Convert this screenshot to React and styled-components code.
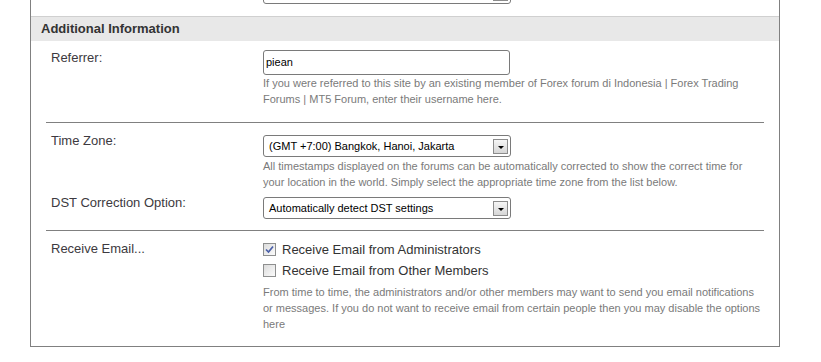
import React from "react";
import styled, { createGlobalStyle } from "styled-components";

const GlobalStyle = createGlobalStyle`
  body {
    margin: 0;
    background: #ffffff;
    font-family: Tahoma, "Liberation Sans", Arial, sans-serif;
  }
`;

const Page = styled.div`
  width: 821px;
  height: 362px;
  overflow: hidden;
  padding-left: 30px;
  box-sizing: border-box;
`;

const Panel = styled.div`
  width: 750px;
  margin-top: -19px;
  box-sizing: border-box;
  border: 1px solid #808080;
  border-top: none;
  background: #fff;
`;

const PrevRow = styled.div`
  padding: 1px 15px 12px 232px;
`;

const Header = styled.div`
  border-top: 1px solid #d0d0d0;
  background: #e8e8e8;
  height: 24px;
  line-height: 24px;
  padding-left: 10px;
  font-size: 13px;
  font-weight: bold;
  color: #333;
`;

const Body = styled.div`
  margin: 0 15px;
`;

const Row = styled.div`
  display: grid;
  grid-template-columns: 217px 500px;
  padding-top: ${(p) => p.pt}px;
  padding-bottom: ${(p) => p.pb}px;
  border-top: ${(p) => (p.divider ? "1px solid #808080" : "none")};
`;

const Labels = styled.div`
  display: flex;
  flex-direction: column;
  padding-left: 5px;
`;

const Label = styled.div`
  font-size: 13px;
  line-height: 16px;
  color: #3d3a40;
  margin-top: ${(p) => p.mt || 0}px;
`;

const Values = styled.div`
  display: flex;
  flex-direction: column;
  align-items: flex-start;
`;

const TextInput = styled.div`
  width: 247px;
  height: 25px;
  box-sizing: border-box;
  border: 1px solid #7a7a7a;
  border-radius: 3px;
  padding-left: 2px;
  font-size: 11px;
  line-height: 23px;
  color: #000;
`;

const SelectBox = styled.div`
  width: 248px;
  height: 22px;
  box-sizing: border-box;
  border: 1px solid #7a7a7a;
  border-radius: 3px;
  display: flex;
  align-items: center;
  justify-content: space-between;
  padding: 0 2px 0 5px;
  font-size: 11px;
  color: #000;
  margin-top: ${(p) => p.mt || 0}px;
`;

const DropButton = styled.div`
  width: 15px;
  height: 15px;
  box-sizing: border-box;
  border: 1px solid #8c8c8c;
  background: linear-gradient(#f6f6f6, #d6d6d6);
  display: flex;
  align-items: flex-end;
  justify-content: center;
  padding-bottom: 4px;
  &::after {
    content: "";
    border-left: 3px solid transparent;
    border-right: 3px solid transparent;
    border-top: 3px solid #000;
  }
`;

const Desc = styled.div`
  font-size: 11px;
  line-height: 16px;
  color: #7a7a7a;
  width: 500px;
  margin-top: ${(p) => p.mt || 0}px;
`;

const CheckRow = styled.label`
  display: flex;
  align-items: center;
  gap: 6px;
  height: 16px;
  font-size: 13px;
  color: #333;
  margin-top: ${(p) => p.mt || 0}px;
`;

const Box = styled.span`
  width: 13px;
  height: 13px;
  box-sizing: border-box;
  border: 1px solid #8e8f8f;
  background: linear-gradient(135deg, #dcdcdc, #fbfbfb);
  display: flex;
  align-items: center;
  justify-content: center;
`;

function Select({ children, mt }) {
  return (
    <SelectBox mt={mt}>
      <span>{children}</span>
      <DropButton />
    </SelectBox>
  );
}

function Checkbox({ checked, children, mt }) {
  return (
    <CheckRow mt={mt}>
      <Box>
        {checked && (
          <svg width="9" height="9" viewBox="0 0 9 9">
            <path d="M1 4.5 L3.5 7 L8 1.5" fill="none" stroke="#4a5fa8" strokeWidth="1.7" />
          </svg>
        )}
      </Box>
      {children}
    </CheckRow>
  );
}

export default function App() {
  return (
    <>
      <GlobalStyle />
      <Page>
        <Panel>
          <PrevRow>
            <Select>&nbsp;</Select>
          </PrevRow>
          <Header>Additional Information</Header>
          <Body>
            <Row pt={9} pb={15}>
              <Labels>
                <Label>Referrer:</Label>
              </Labels>
              <Values>
                <TextInput>piean</TextInput>
                <Desc>
                  If you were referred to this site by an existing member of Forex forum di Indonesia | Forex Trading
                  Forums | MT5 Forum, enter their username here.
                </Desc>
              </Values>
            </Row>
            <Row divider pt={10} pb={11}>
              <Labels>
                <Label>Time Zone:</Label>
                <Label mt={46}>DST Correction Option:</Label>
              </Labels>
              <Values>
                <Select mt={2}>(GMT +7:00) Bangkok, Hanoi, Jakarta</Select>
                <Desc mt={1}>
                  All timestamps displayed on the forums can be automatically corrected to show the correct time for
                  your location in the world. Simply select the appropriate time zone from the list below.
                </Desc>
                <Select mt={7}>Automatically detect DST settings</Select>
              </Values>
            </Row>
            <Row divider pt={10} pb={14}>
              <Labels>
                <Label>Receive Email...</Label>
              </Labels>
              <Values>
                <Checkbox checked>Receive Email from Administrators</Checkbox>
                <Checkbox mt={5}>Receive Email from Other Members</Checkbox>
                <Desc mt={6}>
                  From time to time, the administrators and/or other members may want to send you email notifications
                  or messages. If you do not want to receive email from certain people then you may disable the options
                  here
                </Desc>
              </Values>
            </Row>
          </Body>
        </Panel>
      </Page>
    </>
  );
}
